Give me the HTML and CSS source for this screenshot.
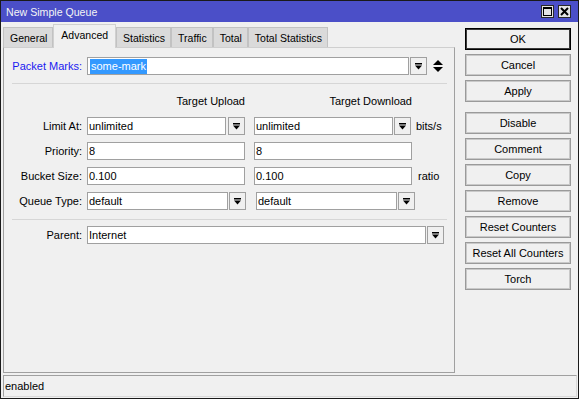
FILE: index.html
```html
<!DOCTYPE html>
<html>
<head>
<meta charset="utf-8">
<link rel="stylesheet" href="styles.css">
</head>
<body>
<div class="window">
  <div class="titlebar">
    <span class="title">New Simple Queue</span>
    <div class="tb-btns">
      <span class="tb-btn"><svg width="9" height="9" viewBox="0 0 9 9"><rect x="0.5" y="1" width="8" height="7.5" fill="none" stroke="#000" stroke-width="1"/><rect x="0" y="0" width="9" height="2" fill="#000"/></svg></span>
      <span class="tb-btn"><svg width="9" height="9" viewBox="0 0 9 9"><path d="M1 1 L8 8 M8 1 L1 8" stroke="#000" stroke-width="2"/></svg></span>
    </div>
  </div>
  <div class="main">
    <div class="left">
      <div class="tabs">
        <div class="tab">General</div>
        <div class="tab active">Advanced</div>
        <div class="tab">Statistics</div>
        <div class="tab">Traffic</div>
        <div class="tab">Total</div>
        <div class="tab">Total Statistics</div>
      </div>
      <div class="panel">
        <div class="row first">
          <span class="label blue">Packet Marks:</span>
          <span class="field w322"><span class="sel">some-mark</span></span>
          <span class="dd ml1"><svg width="7" height="7" viewBox="0 0 7 7"><rect x="0" y="0" width="7" height="1.5" fill="#000"/><polygon points="0,2.5 7,2.5 3.5,6.5" fill="#000"/></svg></span>
          <span class="updown"><svg width="10" height="12" viewBox="0 0 10 12"><polygon points="0,5 10,5 5,0" fill="#000"/><polygon points="0,7 10,7 5,12" fill="#000"/></svg></span>
        </div>
        <div class="sep"></div>
        <div class="hdr">
          <span class="hcell">Target Upload</span>
          <span class="hcell ml9">Target Download</span>
        </div>
        <div class="row r1">
          <span class="label">Limit At:</span>
          <span class="field w139">unlimited</span>
          <span class="dd ml2"><svg width="7" height="7" viewBox="0 0 7 7"><rect x="0" y="0" width="7" height="1.5" fill="#000"/><polygon points="0,2.5 7,2.5 3.5,6.5" fill="#000"/></svg></span>
          <span class="field w139 ml9">unlimited</span>
          <span class="dd ml1"><svg width="7" height="7" viewBox="0 0 7 7"><rect x="0" y="0" width="7" height="1.5" fill="#000"/><polygon points="0,2.5 7,2.5 3.5,6.5" fill="#000"/></svg></span>
          <span class="unit">bits/s</span>
        </div>
        <div class="row">
          <span class="label">Priority:</span>
          <span class="field w158">8</span>
          <span class="field w158 ml9">8</span>
        </div>
        <div class="row">
          <span class="label">Bucket Size:</span>
          <span class="field w158">0.100</span>
          <span class="field w158 ml9">0.100</span>
          <span class="unit ratio">ratio</span>
        </div>
        <div class="row">
          <span class="label">Queue Type:</span>
          <span class="field w141">default</span>
          <span class="dd ml1"><svg width="7" height="7" viewBox="0 0 7 7"><rect x="0" y="0" width="7" height="1.5" fill="#000"/><polygon points="0,2.5 7,2.5 3.5,6.5" fill="#000"/></svg></span>
          <span class="field w141 ml10">default</span>
          <span class="dd ml1"><svg width="7" height="7" viewBox="0 0 7 7"><rect x="0" y="0" width="7" height="1.5" fill="#000"/><polygon points="0,2.5 7,2.5 3.5,6.5" fill="#000"/></svg></span>
        </div>
        <div class="sep sep2"></div>
        <div class="row parent">
          <span class="label">Parent:</span>
          <span class="field w339">Internet</span>
          <span class="dd ml1"><svg width="7" height="7" viewBox="0 0 7 7"><rect x="0" y="0" width="7" height="1.5" fill="#000"/><polygon points="0,2.5 7,2.5 3.5,6.5" fill="#000"/></svg></span>
        </div>
      </div>
    </div>
    <div class="buttons">
      <div class="btn default">OK</div>
      <div class="btn">Cancel</div>
      <div class="btn spaced">Apply</div>
      <div class="btn">Disable</div>
      <div class="btn">Comment</div>
      <div class="btn">Copy</div>
      <div class="btn">Remove</div>
      <div class="btn">Reset Counters</div>
      <div class="btn">Reset All Counters</div>
      <div class="btn">Torch</div>
    </div>
  </div>
  <div class="status">enabled</div>
</div>
</body>
</html>
```

FILE: styles.css
```css
html, body {
  margin: 0;
  padding: 0;
  background: #f0f0f0;
}

.window {
  width: 579px;
  height: 399px;
  box-sizing: border-box;
  border: 1px solid #1a1a1a;
  background: #f0f0f0;
  display: flex;
  flex-direction: column;
  font-family: "Liberation Sans", Arial, sans-serif;
  font-size: 11px;
  color: #000;
}

.titlebar {
  flex: none;
  height: 21px;
  background: #4b4fc8;
  display: flex;
  align-items: center;
  padding: 0 7px 0 5px;
  color: #f4f4f4;
}

.title {
  font-size: 10.6px;
}

.tb-btns {
  margin-left: auto;
  display: flex;
  gap: 4px;
}

.tb-btn {
  width: 13px;
  height: 13px;
  box-sizing: border-box;
  border: 1px solid #2a2a2a;
  background: #e4e4e4;
  display: flex;
  align-items: center;
  justify-content: center;
}

.main {
  flex: none;
  height: 351px;
  display: flex;
}

.left {
  margin-left: 2px;
  width: 452px;
  display: flex;
  flex-direction: column;
}

.tabs {
  flex: none;
  height: 25px;
  display: flex;
  align-items: flex-end;
}

.tab {
  height: 20px;
  box-sizing: border-box;
  padding: 0 5px 0 6px;
  border: 1px solid #c2c2c2;
  border-bottom: none;
  background: #dadada;
  display: flex;
  align-items: center;
  white-space: nowrap;
  font-size: 10.5px;
}

.tab.active {
  height: 24px;
  padding: 0 7px 3px 7px;
  background: #f0f0f0;
  border-color: #d0d0d0;
  margin-bottom: -1px;
  position: relative;
  z-index: 1;
}

.panel {
  flex: 1;
  border: 1px solid #a0a0a0;
  border-top-color: #cfcfcf;
  display: flex;
  flex-direction: column;
}

.row {
  display: flex;
  align-items: center;
  height: 18px;
  margin-top: 7px;
}

.row.first {
  margin-top: 9px;
}

.row.r1 {
  margin-top: 9px;
}

.row.parent {
  margin-top: 6px;
}

.label {
  flex: none;
  width: 78px;
  margin-right: 5px;
  text-align: right;
  white-space: nowrap;
}

.label.blue {
  color: #1a1af0;
}

.field {
  flex: none;
  height: 18px;
  box-sizing: border-box;
  border: 1px solid #a0a0a0;
  background: #fff;
  padding-left: 1px;
  display: flex;
  align-items: center;
  white-space: nowrap;
}

.w139 { width: 139px; }
.w141 { width: 141px; }
.w158 { width: 158px; }
.w322 { width: 322px; }
.w339 { width: 339px; }

.ml1 { margin-left: 1px; }
.ml2 { margin-left: 2px; }
.ml9 { margin-left: 9px; }
.ml10 { margin-left: 10px; }

.sel {
  background: #3399ff;
  color: #fff;
  line-height: 15px;
  padding: 0 1px;
  margin-left: 1px;
}

.dd {
  flex: none;
  width: 17px;
  height: 18px;
  box-sizing: border-box;
  border: 1px solid #a0a0a0;
  background: #f0f0f0;
  display: flex;
  align-items: center;
  justify-content: center;
}

.updown {
  margin-left: 6px;
  display: flex;
  align-items: center;
}

.unit {
  margin-left: 5px;
}

.unit.ratio {
  margin-left: 6px;
}

.sep {
  flex: none;
  height: 1px;
  background: #d6d6d6;
  margin: 8px 7px 0 8px;
}

.sep.sep2 {
  margin-top: 9px;
}

.hdr {
  display: flex;
  margin: 10px 0 0 83px;
  line-height: 14px;
}

.hcell {
  width: 158px;
  text-align: right;
  white-space: nowrap;
}

.buttons {
  margin-left: 10px;
  width: 106px;
  padding-top: 6px;
  display: flex;
  flex-direction: column;
  gap: 4px;
}

.btn {
  height: 22px;
  box-sizing: border-box;
  border: 1px solid #9a9a9a;
  box-shadow: inset 0 0 0 1px #c9c9c9;
  background: #f0f0f0;
  display: flex;
  align-items: center;
  justify-content: center;
  white-space: nowrap;
}

.btn.default {
  border: 1px solid #000;
  box-shadow: inset 0 0 0 1px #3a3a3a;
}

.btn.spaced {
  margin-bottom: 6px;
}

.status {
  flex: none;
  height: 22px;
  box-sizing: border-box;
  margin: 2px 1px 0 2px;
  border: 1px solid #a0a0a0;
  border-right-color: #d8d8d8;
  border-bottom-color: #d8d8d8;
  padding-left: 1px;
  display: flex;
  align-items: center;
}
```
